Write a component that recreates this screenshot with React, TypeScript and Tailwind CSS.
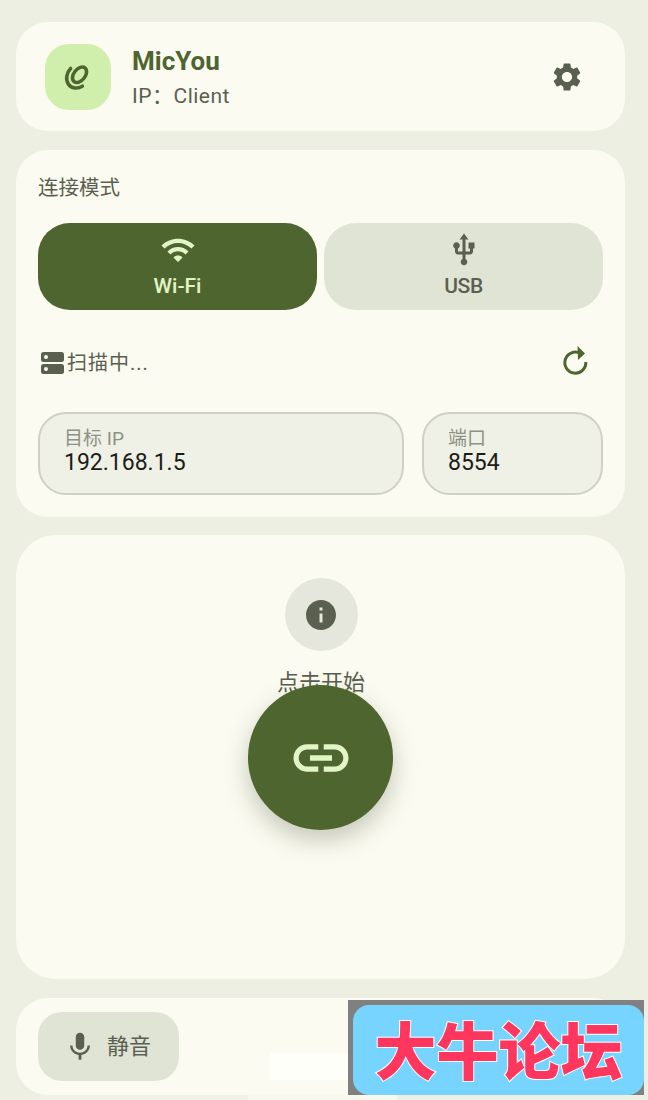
import React from 'react';

const cjk = "font-['Roboto','Noto_Sans_CJK_SC',sans-serif]";

function LogoMark() {
  return (
    <svg viewBox="0 0 24 24" className="w-[34px] h-[34px] -ml-[2px]" fill="none" stroke="#4f6530" strokeWidth="2.5" strokeLinecap="round">
      <ellipse cx="13.8" cy="10.4" rx="4" ry="6.200" transform="rotate(38 13.8 10.4)" />
      <path d="M7.5 6C4.500 9 3.800 14 6 17.200c2.200 3 6.500 3.200 9.800 1.300" />
    </svg>
  );
}

function GearIcon() {
  return (
    <svg viewBox="0 0 24 24" className="w-[34px] h-[34px]" fill="#5a6050">
      <path d="M19.14,12.94c0.04-0.3,0.06-0.61,0.06-0.94c0-0.32-0.02-0.64-0.07-0.94l2.03-1.58c0.18-0.14,0.23-0.41,0.12-0.61 l-1.92-3.32c-0.12-0.22-0.37-0.29-0.59-0.22l-2.39,0.96c-0.5-0.38-1.03-0.7-1.62-0.94L14.4,2.81c-0.04-0.24-0.24-0.41-0.48-0.41 h-3.84c-0.24,0-0.43,0.17-0.47,0.41L9.25,5.35C8.66,5.59,8.12,5.92,7.63,6.29L5.24,5.33c-0.22-0.08-0.47,0-0.59,0.22L2.74,8.87 C2.62,9.08,2.66,9.34,2.86,9.48l2.03,1.58C4.84,11.36,4.8,11.69,4.8,12s0.02,0.64,0.07,0.94l-2.03,1.58 c-0.18,0.14-0.23,0.41-0.12,0.61l1.92,3.32c0.12,0.22,0.37,0.29,0.59,0.22l2.39-0.96c0.5,0.38,1.03,0.7,1.62,0.94l0.36,2.54 c0.05,0.24,0.24,0.41,0.48,0.41h3.84c0.24,0,0.44-0.17,0.47-0.41l0.36-2.54c0.59-0.24,1.13-0.56,1.62-0.94l2.39,0.96 c0.22,0.08,0.47,0,0.59-0.22l1.92-3.32c0.12-0.22,0.07-0.47-0.12-0.61L19.14,12.94z M12,15.6c-1.98,0-3.6-1.62-3.6-3.6 s1.62-3.6,3.6-3.6s3.6,1.62,3.6,3.6S13.98,15.6,12,15.6z" />
    </svg>
  );
}

function WifiIcon() {
  return (
    <svg viewBox="0 0 24 24" className="w-[36px] h-[36px]" fill="#e3f5c6">
      <path d="M1 9l2 2c5-5 13-5 18 0l2-2C17 3 7 3 1 9zm4 4l2 2c2.800-2.800 7.200-2.800 10 0l2-2c-3.900-3.900-10.100-3.900-14 0zm4 4l3 3 3-3c-1.700-1.700-4.300-1.700-6 0z" />
    </svg>
  );
}

function UsbIcon() {
  return (
    <svg viewBox="0 0 24 24" className="w-[36px] h-[36px]" fill="#5a6050">
      <path d="M15 7v4h1v2h-3V5h2l-3-4-3 4h2v8H8v-2.070c.700-.370 1.200-1.080 1.200-1.930 0-1.210-.990-2.200-2.200-2.200-1.210 0-2.200.990-2.200 2.200 0 .850.500 1.560 1.200 1.930V13c0 1.110.890 2 2 2h3v3.050c-.710.370-1.200 1.100-1.200 1.950 0 1.220.990 2.200 2.200 2.200 1.210 0 2.200-.980 2.200-2.200 0-.850-.490-1.580-1.200-1.950V15h3c1.110 0 2-.890 2-2v-2h1V7h-4z" />
    </svg>
  );
}

function StorageIcon() {
  return (
    <svg viewBox="0 0 23 22" className="w-[23px] h-[22px] shrink-0">
      <rect x="0" y="0" width="23" height="10" rx="2.500" fill="#5a6050" />
      <rect x="0" y="12" width="23" height="10" rx="2.500" fill="#5a6050" />
      <circle cx="5" cy="5" r="2" fill="#fbfbf1" />
      <circle cx="5" cy="17" r="2" fill="#fbfbf1" />
    </svg>
  );
}

function RefreshIcon() {
  return (
    <svg viewBox="0 3 40 40" className="w-[40px] h-[40px]" fill="none">
      <path d="M25.500 13.500A10.500 10.500 0 1 0 30.800 22" stroke="#4f6530" strokeWidth="3" />
      <path d="M22.500 6L30 13.500L23 20z" fill="#4f6530" />
    </svg>
  );
}

function InfoIcon() {
  return (
    <svg viewBox="0 0 24 24" className="w-[36px] h-[36px]" fill="#5a6050">
      <path d="M12 2C6.480 2 2 6.480 2 12s4.480 10 10 10 10-4.480 10-10S17.520 2 12 2zm1 15h-2v-6h2v6zm0-8h-2V7h2v2z" />
    </svg>
  );
}

function LinkIcon() {
  return (
    <svg viewBox="0 0 24 24" className="w-[66px] h-[66px]" fill="#e3f5c6">
      <path d="M3.900 12c0-1.710 1.390-3.100 3.100-3.100h4V7H7c-2.760 0-5 2.240-5 5s2.240 5 5 5h4v-1.900H7c-1.710 0-3.100-1.390-3.100-3.100zM8 13h8v-2H8v2zm9-6h-4v1.900h4c1.710 0 3.100 1.390 3.100 3.100s-1.390 3.100-3.100 3.100h-4V17h4c2.760 0 5-2.240 5-5s-2.240-5-5-5z" />
    </svg>
  );
}

function MicIcon() {
  return (
    <svg viewBox="0 0 24 24" className="w-[34px] h-[34px]" fill="#5a6050">
      <path d="M12 14c1.660 0 2.990-1.340 2.990-3L15 5c0-1.660-1.340-3-3-3S9 3.340 9 5v6c0 1.660 1.340 3 3 3zm5.300-3c0 3-2.540 5.100-5.300 5.100S6.700 14 6.700 11H5c0 3.410 2.720 6.230 6 6.720V21h2v-3.280c3.280-.480 6-3.300 6-6.720h-1.700z" />
    </svg>
  );
}

export default function App() {
  return (
    <div className={`relative w-[648px] h-[1100px] overflow-hidden bg-[#eeefe3] ${cjk}`}>
      <div className="flex flex-col pl-4 pr-[23px] pt-[22px]">
        {/* Header */}
        <div className="h-[109px] shrink-0 rounded-[32px] bg-[#fbfbf1] flex items-center pl-[29px] pr-[41px]">
          <div className="w-[66px] h-[66px] rounded-[24px] bg-[#d0efac] flex items-center justify-center">
            <LogoMark />
          </div>
          <div className="ml-[21px] flex-1">
            <div className="text-[26px] leading-[30px] font-bold text-[#4f6530]">MicYou</div>
            <div className="mt-[8px] text-[21px] leading-[24px] tracking-[0.5px] text-[#5a6050]">IP：Client</div>
          </div>
          <GearIcon />
        </div>

        {/* Connection mode */}
        <div className="mt-[19px] h-[367px] shrink-0 rounded-[32px] bg-[#fbfbf1] px-[22px] pt-[25px]">
          <div className="text-[20.500px] leading-[27px] text-[#5a6050]">连接模式</div>
          <div className="mt-[21px] flex gap-[7px]">
            <div className="flex-1 h-[87px] rounded-[32px] bg-[#4f6530] flex flex-col items-center pt-[9px]">
              <WifiIcon />
              <div className="mt-[6px] text-[21px] leading-[24px] font-medium text-[#e3f5c6]">Wi-Fi</div>
            </div>
            <div className="flex-1 h-[87px] rounded-[32px] bg-[#e0e4d5] flex flex-col items-center pt-[9px]">
              <UsbIcon />
              <div className="mt-[6px] text-[21px] leading-[24px] font-medium tracking-[-0.4px] text-[#5a6050]">USB</div>
            </div>
          </div>
          <div className="mt-[35px] h-[36px] flex items-center pl-[3px] pr-[8px]">
            <StorageIcon />
            <div className="ml-[3px] flex-1 text-[20px] leading-[27px] tracking-[1px] text-[#5a6050]">扫描中...</div>
            <RefreshIcon />
          </div>
          <div className="mt-[31px] flex gap-[18px]">
            <div className="flex-1 h-[83px] rounded-[28px] border-2 border-[#cfd2c3] bg-[#eff0e6] pl-[24px] pt-[13px]">
              <div className="text-[19px] leading-[24px] text-[#8d9283]">目标 IP</div>
              <div className="text-[23px] leading-[24px] text-[#1c1d17]">192.168.1.5</div>
            </div>
            <div className="w-[181px] h-[83px] rounded-[28px] border-2 border-[#cfd2c3] bg-[#eff0e6] pl-[24px] pt-[13px]">
              <div className="text-[19px] leading-[24px] text-[#8d9283]">端口</div>
              <div className="text-[23px] leading-[24px] text-[#1c1d17]">8554</div>
            </div>
          </div>
        </div>

        {/* Status */}
        <div className="mt-[18px] h-[444px] shrink-0 rounded-[40px] bg-[#fbfbf1] flex flex-col items-center pt-[43px] pl-[1px]">
          <div className="w-[73px] h-[73px] rounded-full bg-[#e5e7dd] flex items-center justify-center">
            <InfoIcon />
          </div>
          <div className="mt-[17px] text-[22px] leading-[30px] text-[#5a6050]">点击开始</div>
        </div>

        {/* Bottom bar */}
        <div className="mt-[19px] h-[97px] shrink-0 rounded-[32px] bg-[#fbfbf1] px-[22px] flex items-center">
          <div className="w-[141px] h-[69px] rounded-[24px] bg-[#e0e4d5] flex items-center pl-[25px] gap-[10px]">
            <MicIcon />
            <span className="text-[22px] leading-[30px] text-[#5a6050]">静音</span>
          </div>
        </div>
      </div>

      {/* Connect FAB, sits over the status card */}
      <div className="absolute left-[248px] top-[685px] w-[145px] h-[145px] rounded-full bg-[#4f6530] flex items-center justify-center shadow-[0_10px_24px_rgba(60,70,40,0.28)]">
        <LinkIcon />
      </div>

      {/* Bits of the page showing under the bar and the watermark */}
      <div className="absolute left-[40px] top-[1095px] w-[208px] h-[5px] bg-[#f1f2e7]" />
      <div className="absolute left-[248px] top-[1095px] w-[149px] h-[5px] bg-[#f8f8ee]" />
      <div className="absolute left-[270px] top-[1053px] w-[78px] h-[27px] bg-[#fefff9]" />
      <div className="absolute left-[348px] top-[1000px] w-[296px] h-[95px] bg-[#808080] pl-[5px] pt-[5px]">
        <div className="w-[291px] h-[90px] rounded-[16px] bg-[#76d4ff] flex items-center justify-center pb-[4px]">
          <span className="font-['Noto_Sans_CJK_SC',sans-serif] font-black text-[62px] leading-[70px] text-[#ff375f] [-webkit-text-stroke:2px_#ffffff] [paint-order:stroke_fill]">大牛论坛</span>
        </div>
      </div>
    </div>
  );
}
